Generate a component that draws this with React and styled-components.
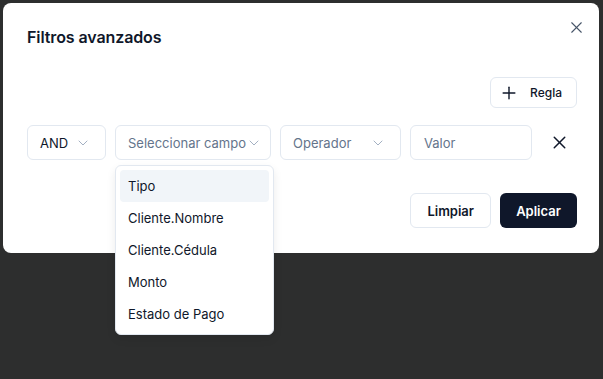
import React from 'react';
import styled, { createGlobalStyle } from 'styled-components';
import { X, Plus, ChevronDown } from 'lucide-react';

const GlobalStyle = createGlobalStyle`
  html, body {
    margin: 0;
    padding: 0;
    background: #2d2e2e;
    font-family: Inter, "Noto Sans", "Liberation Sans", sans-serif;
    color: #0f172a;
  }
  * { box-sizing: border-box; }
`;

const Page = styled.div`
  min-height: 100vh;
  padding: 3px 4px 0 3px;
`;

const Dialog = styled.div`
  position: relative;
  width: 596px;
  height: 250px;
  background: #fff;
  border-radius: 8px;
  padding: 24px 22px 24px 24px;
  display: flex;
  flex-direction: column;
`;

const Title = styled.h2`
  margin: 0;
  font-size: 16px;
  line-height: 20px;
  font-weight: 600;
  letter-spacing: -0.1px;
`;

const CloseButton = styled.button`
  position: absolute;
  top: 14px;
  right: 13px;
  width: 20px;
  height: 20px;
  padding: 0;
  border: none;
  background: none;
  color: #475569;
  display: flex;
  align-items: center;
  justify-content: center;
`;

const Toolbar = styled.div`
  display: flex;
  justify-content: flex-end;
  margin-top: 30px;
`;

const OutlineButton = styled.button`
  height: ${({ $h }) => $h || 35}px;
  padding: 0 ${({ $pr }) => $pr || 16}px 0 ${({ $pl }) => $pl || 16}px;
  border: 1px solid #e2e8f0;
  border-radius: 6px;
  background: #fff;
  color: #0f172a;
  font-family: inherit;
  font-size: ${({ $fs }) => $fs || 13}px;
  font-weight: ${({ $weight }) => $weight || 600};
  display: flex;
  align-items: center;
  gap: ${({ $gap }) => $gap || 0}px;
`;

const PrimaryButton = styled.button`
  height: 35px;
  width: 77px;
  border: none;
  border-radius: 6px;
  background: #0f172a;
  color: #fff;
  font-family: inherit;
  font-size: 13px;
  font-weight: 600;
`;

const RuleRow = styled.div`
  display: flex;
  align-items: center;
  gap: 9px;
  margin-top: 17px;
`;

const SelectWrap = styled.div`
  position: relative;
`;

const Select = styled.div`
  width: ${({ $w }) => $w}px;
  height: 35px;
  border: 1px solid #e2e8f0;
  border-radius: 6px;
  background: #fff;
  padding: 0 ${({ $pr }) => $pr ?? 14}px 0 12px;
  display: flex;
  align-items: center;
  justify-content: space-between;
  font-size: 13px;
  color: ${({ $placeholder }) => ($placeholder ? '#64748b' : '#0f172a')};
  white-space: nowrap;
  overflow: hidden;

  svg {
    flex-shrink: 0;
    color: #94a3b8;
  }
`;

const Input = styled.div`
  width: 122px;
  height: 35px;
  border: 1px solid #e2e8f0;
  border-radius: 6px;
  padding: 0 13px;
  display: flex;
  align-items: center;
  font-size: 13px;
  color: #64748b;
`;

const RemoveButton = styled.button`
  width: 36px;
  height: 35px;
  padding: 0;
  border: none;
  background: none;
  color: #0f172a;
  display: flex;
  align-items: center;
  justify-content: center;
`;

const Footer = styled.div`
  display: flex;
  justify-content: flex-end;
  gap: 9px;
  margin-top: 33px;
`;

const Menu = styled.ul`
  position: absolute;
  top: calc(100% + 5px);
  left: 0;
  width: 159px;
  margin: 0;
  padding: 4px;
  list-style: none;
  background: #fff;
  border: 1px solid #e2e8f0;
  border-radius: 6px;
  box-shadow: 0 4px 10px rgba(0, 0, 0, 0.08);
  z-index: 10;
`;

const MenuItem = styled.li`
  height: 32px;
  padding: 0 8px;
  display: flex;
  align-items: center;
  border-radius: 4px;
  font-size: 13px;
  color: #0f172a;
  background: ${({ $active }) => ($active ? '#f1f5f9' : 'transparent')};
`;

const fields = ['Tipo', 'Cliente.Nombre', 'Cliente.Cédula', 'Monto', 'Estado de Pago'];

export default function App() {
  return (
    <Page>
      <GlobalStyle />
      <Dialog>
        <Title>Filtros avanzados</Title>
        <CloseButton>
          <X size={19} strokeWidth={1.4} />
        </CloseButton>

        <Toolbar>
          <OutlineButton $h={31} $pl={8} $pr={14} $gap={11} $fs={12} $weight={500}>
            <Plus size={20} strokeWidth={1.7} />
            Regla
          </OutlineButton>
        </Toolbar>

        <RuleRow>
          <Select $w={79}>
            AND
            <ChevronDown size={16} strokeWidth={1.3} />
          </Select>
          <SelectWrap>
            <Select $w={156} $pr={16} $placeholder>
              Seleccionar campo
              <ChevronDown size={16} strokeWidth={1.3} />
            </Select>
            <Menu>
              {fields.map((f, i) => (
                <MenuItem key={f} $active={i === 0}>{f}</MenuItem>
              ))}
            </Menu>
          </SelectWrap>
          <Select $w={121} $placeholder>
            Operador
            <ChevronDown size={16} strokeWidth={1.3} />
          </Select>
          <Input>Valor</Input>
          <RemoveButton>
            <X size={21} strokeWidth={1.7} />
          </RemoveButton>
        </RuleRow>

        <Footer>
          <OutlineButton>Limpiar</OutlineButton>
          <PrimaryButton>Aplicar</PrimaryButton>
        </Footer>
      </Dialog>
    </Page>
  );
}
